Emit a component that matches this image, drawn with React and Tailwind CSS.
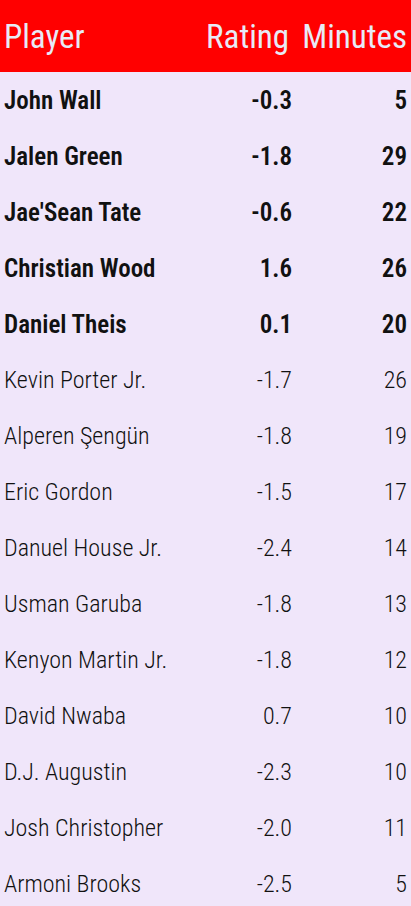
const players = [
  { name: "John Wall", rating: "-0.3", minutes: 5, starter: true },
  { name: "Jalen Green", rating: "-1.8", minutes: 29, starter: true },
  { name: "Jae'Sean Tate", rating: "-0.6", minutes: 22, starter: true },
  { name: "Christian Wood", rating: "1.6", minutes: 26, starter: true },
  { name: "Daniel Theis", rating: "0.1", minutes: 20, starter: true },
  { name: "Kevin Porter Jr.", rating: "-1.7", minutes: 26 },
  { name: "Alperen Şengün", rating: "-1.8", minutes: 19 },
  { name: "Eric Gordon", rating: "-1.5", minutes: 17 },
  { name: "Danuel House Jr.", rating: "-2.4", minutes: 14 },
  { name: "Usman Garuba", rating: "-1.8", minutes: 13 },
  { name: "Kenyon Martin Jr.", rating: "-1.8", minutes: 12 },
  { name: "David Nwaba", rating: "0.7", minutes: 10 },
  { name: "D.J. Augustin", rating: "-2.3", minutes: 10 },
  { name: "Josh Christopher", rating: "-2.0", minutes: 11 },
  { name: "Armoni Brooks", rating: "-2.5", minutes: 5 },
];

export default function App() {
  return (
    <div className="min-h-screen bg-[#f0e6fa] font-['Roboto_Condensed',sans-serif] text-[#111]">
      <div className="grid h-[72px] grid-cols-[1fr_90px_115px] items-center bg-[#ff0000] pl-1 pr-1 text-[33px] leading-none text-[#e8eaf6]">
        <div>Player</div>
        <div className="pr-[3px] text-right">Rating</div>
        <div className="text-right">Minutes</div>
      </div>
      {players.map((p) => (
        <div
          key={p.name}
          className={`grid h-[56px] grid-cols-[1fr_90px_115px] items-center pl-1 pr-1 leading-none ${
            p.starter ? "text-[25px] font-semibold" : "text-[24px] font-light"
          }`}
        >
          <div>{p.name}</div>
          <div className="text-right">{p.rating}</div>
          <div className="text-right">{p.minutes}</div>
        </div>
      ))}
    </div>
  );
}
